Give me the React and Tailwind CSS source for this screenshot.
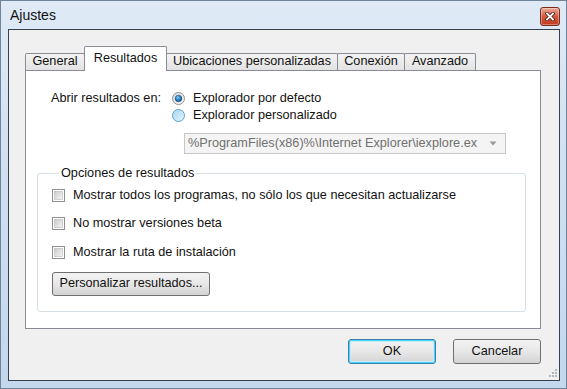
import React from 'react';

// ── Small Win7-ish controls ────────────────────────────────────────────────
function Radio({ checked }) {
  return (
    <svg width="13" height="13" viewBox="0 0 13 13" className="shrink-0">
      <defs>
        <linearGradient id={checked ? 'rbOn' : 'rbOff'} x1="0" y1="0" x2="1" y2="1">
          {checked ? (
            <>
              <stop offset="0" stopColor="#d9d9d9" />
              <stop offset="1" stopColor="#fbfbfb" />
            </>
          ) : (
            <>
              <stop offset="0" stopColor="#a9d6f1" />
              <stop offset="1" stopColor="#e4f4fc" />
            </>
          )}
        </linearGradient>
        <radialGradient id="rbDot" cx="0.4" cy="0.35" r="0.7">
          <stop offset="0" stopColor="#8cd0f5" />
          <stop offset="0.5" stopColor="#2a86c6" />
          <stop offset="1" stopColor="#0d4f86" />
        </radialGradient>
      </defs>
      <circle
        cx="6.5"
        cy="6.5"
        r="6"
        fill={checked ? 'url(#rbOn)' : 'url(#rbOff)'}
        stroke={checked ? '#8e8f8f' : '#5e9fd0'}
      />
      {checked && <circle cx="6.5" cy="6.5" r="3.3" fill="url(#rbDot)" stroke="#1b4f7d" strokeWidth="0.6" />}
    </svg>
  );
}

function Check() {
  return (
    <svg width="13" height="13" viewBox="0 0 13 13" className="shrink-0">
      <defs>
        <linearGradient id="cbIn" x1="0" y1="0" x2="1" y2="1">
          <stop offset="0" stopColor="#c9c9c9" />
          <stop offset="1" stopColor="#f7f7f7" />
        </linearGradient>
      </defs>
      <rect x="0.5" y="0.5" width="12" height="12" fill="#fff" stroke="#8f8f8f" />
      <rect x="2.5" y="2.5" width="8" height="8" fill="url(#cbIn)" stroke="#b8b8b8" strokeWidth="0.6" />
    </svg>
  );
}

function Tab({ label, width, active }) {
  return active ? (
    <div
      className="relative z-10 -ml-px -mb-px h-[25px] flex items-center justify-center border border-b-0 border-[#898c95] rounded-t-[2px] bg-white"
      style={{ width }}
    >
      {label}
    </div>
  ) : (
    <div
      className="-ml-px first:ml-0 h-[17px] flex items-center justify-center border border-b-0 border-[#898c95] rounded-t-[2px] bg-gradient-to-b from-[#f4f4f4] to-[#e2e2e2]"
      style={{ width }}
    >
      {label}
    </div>
  );
}

const btn =
  'flex items-center justify-center rounded-[3px] border bg-gradient-to-b from-[#f3f3f3] via-[#e7e7e7] to-[#d3d3d3]';

export default function App() {
  return (
    <div className="w-[567px] h-[389px] flex flex-col border border-[#6f8399] bg-gradient-to-b from-[#dfeaf6] via-[#cddff1] to-[#c3d7ed] font-['Liberation_Sans',Arial,sans-serif] text-[12.7px] text-[#111]">
      {/* title bar */}
      <div className="h-[28px] flex items-start justify-between pl-[9px] pr-[6px]">
        <span className="mt-[6px] text-[14px] leading-[17px] text-[#111]">Ajustes</span>
        <div className="mt-[6px] w-[20px] h-[19px] flex items-center justify-center rounded-[3px] border border-[#7d2a1c] bg-gradient-to-b from-[#ebab9d] via-[#d45a40] to-[#c13a1e] shadow-[inset_0_0_0_1px_rgba(255,255,255,0.35)]">
          <svg width="10" height="9" viewBox="0 0 10 9">
            <path d="M2 1.5 L8 7.5 M8 1.5 L2 7.5" stroke="#4a1c12" strokeWidth="3.4" strokeLinecap="square" />
            <path d="M2 1.5 L8 7.5 M8 1.5 L2 7.5" stroke="#fff" strokeWidth="1.8" strokeLinecap="square" />
          </svg>
        </div>
      </div>

      {/* client area */}
      <div className="relative ml-[7px] mr-[6px] mb-[7px] flex-1 flex flex-col border border-[#34404c] bg-[#f0f0f0] pl-[16px] pt-[16px]">
        {/* tabs */}
        <div className="h-[24px] flex items-end">
          <Tab label="General" width={60} />
          <Tab label="Resultados" width={83} active />
          <Tab label="Ubicaciones personalizadas" width={172} />
          <Tab label="Conexión" width={68} />
          <Tab label="Avanzado" width={72} />
        </div>

        {/* panel */}
        <div className="w-[516px] h-[259px] border border-[#898c95] bg-white pt-[19px] pl-[25px] flex flex-col">
          <div className="flex">
            <div className="w-[121px] h-[17px] flex items-center">Abrir resultados en:</div>
            <div className="flex flex-col">
              <div className="h-[17px] flex items-center gap-[8px]">
                <Radio checked />
                <span>Explorador por defecto</span>
              </div>
              <div className="h-[17px] flex items-center gap-[8px]">
                <Radio />
                <span>Explorador personalizado</span>
              </div>
              <div className="ml-[12px] mt-[9px] w-[322px] h-[21px] flex items-center border border-[#c6c6c6] bg-[#f4f4f4] text-[#707070]">
                <span className="pl-[3px] w-[292px] overflow-hidden whitespace-nowrap">
                  %ProgramFiles(x86)%\Internet Explorer\iexplore.exe
                </span>
                <svg width="8" height="5" viewBox="0 0 8 5" className="ml-[12px]">
                  <path d="M0.5 0.5 L7.5 0.5 L4 4.5 Z" fill="#9a9a9a" />
                </svg>
              </div>
            </div>
          </div>

          <fieldset className="-ml-[14px] mt-[12px] w-[489px] border border-[#d5dfe5] rounded-[3px] pl-[14px] pt-[6px] pb-[15px]">
            <legend className="ml-[7px] px-[2px] leading-[15px]">Opciones de resultados</legend>
            <div className="h-[17px] flex items-center gap-[8px]">
              <Check />
              <span>Mostrar todos los programas, no sólo los que necesitan actualizarse</span>
            </div>
            <div className="mt-[11px] h-[17px] flex items-center gap-[8px]">
              <Check />
              <span>No mostrar versiones beta</span>
            </div>
            <div className="mt-[12px] h-[17px] flex items-center gap-[8px]">
              <Check />
              <span>Mostrar la ruta de instalación</span>
            </div>
            <button className={btn + ' mt-[11px] w-[158px] h-[24px] border-[#707070]'}>
              Personalizar resultados...
            </button>
          </fieldset>
        </div>

        {/* dialog buttons */}
        <div className="w-[516px] mt-[10px] flex justify-end gap-[17px]">
          <button className={btn + ' w-[88px] h-[25px] border-[#3c7fb1] shadow-[inset_0_0_0_1px_#48d3fb,inset_0_0_0_2px_#c4ecfb]'}>
            OK
          </button>
          <button className={btn + ' w-[88px] h-[25px] border-[#707070]'}>Cancelar</button>
        </div>

        {/* size grip */}
        <svg width="8" height="8" viewBox="0 0 8 8" className="absolute right-[2px] bottom-[3px]">
          {[[6, 0], [6, 3], [3, 3], [6, 6], [3, 6], [0, 6]].map(([x, y]) => (
            <rect key={x + '-' + y} x={x} y={y} width="2" height="2" fill="#b4b8bd" />
          ))}
        </svg>
      </div>
    </div>
  );
}
